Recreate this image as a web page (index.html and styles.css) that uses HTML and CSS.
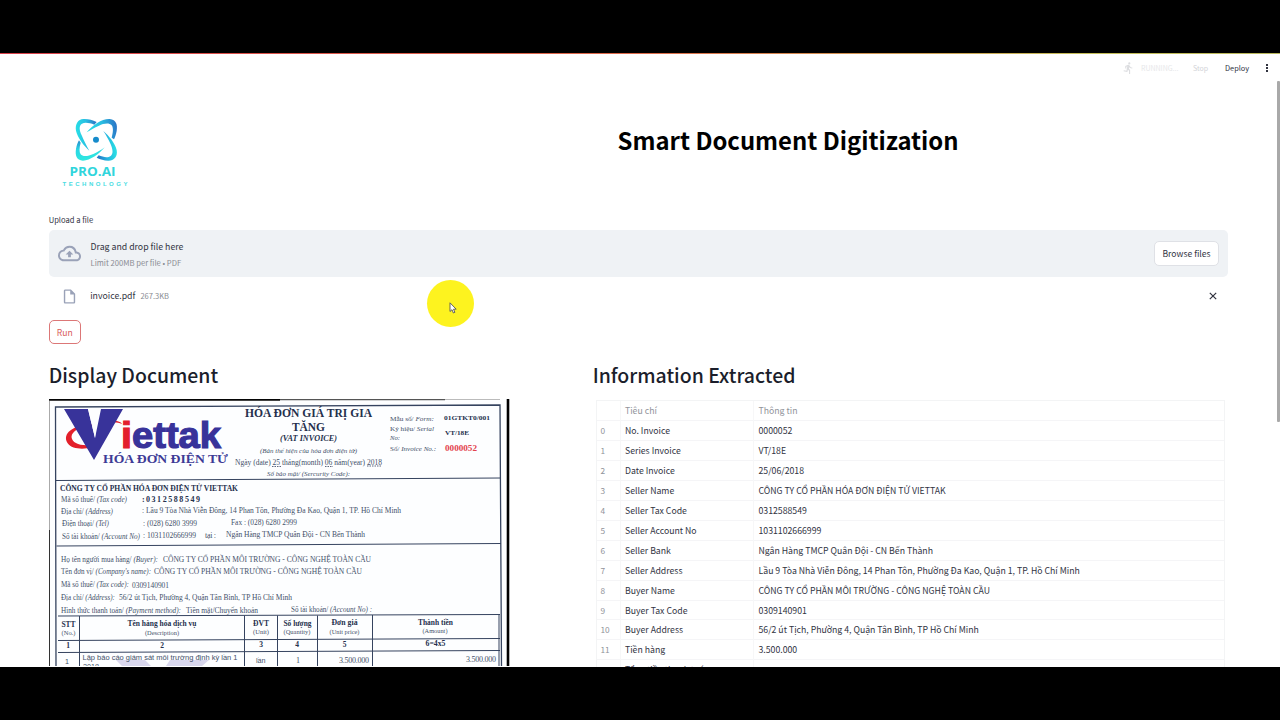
FILE: index.html
```html
<!DOCTYPE html>
<html lang="en">
<head>
<meta charset="utf-8">
<title>Smart Document Digitization</title>
<link rel="stylesheet" href="styles.css">
</head>
<body>
<div class="app">
  <header class="toolbar">
    <svg class="runner" viewBox="0 0 24 24"><path d="M13.500 5.500a2 2 0 1 0 0-4 2 2 0 0 0 0 4zM9.900 19.400l1-4.400 2.100 2v6h2v-7.500l-2.100-2 .6-3A7.300 7.300 0 0 0 19 13v-2c-1.900 0-3.500-1-4.300-2.400l-1-1.600c-.4-.6-1-1-1.700-1-.3 0-.5.1-.8.1L6 8.300V13h2V9.600l1.800-.7L8.200 17l-4.900-1-.4 2z"/></svg>
    <span class="running">RUNNING...</span>
    <span class="stop">Stop</span>
    <span class="deploy">Deploy</span>
    <span class="dots"><i></i><i></i><i></i></span>
  </header>
  <main class="content">
    <section class="brand">
      <svg class="logo" viewBox="0 0 90 84">
        <defs>
          <linearGradient id="toBlue" x1="0" y1=".4" x2="1" y2=".3"><stop offset="0" stop-color="#27dfe6"/><stop offset=".5" stop-color="#28bfe2"/><stop offset="1" stop-color="#2b74c6"/></linearGradient>
          <linearGradient id="fromBlue" x1="0" y1=".7" x2="1" y2=".6"><stop offset="0" stop-color="#2570c4"/><stop offset=".5" stop-color="#25b4df"/><stop offset="1" stop-color="#2ae2e4"/></linearGradient>
          <linearGradient id="down" x1="0" y1="0" x2=".2" y2="1"><stop offset="0" stop-color="#2687cc"/><stop offset=".45" stop-color="#29d6e4"/><stop offset="1" stop-color="#2fe8e0"/></linearGradient>
        </defs>
        <g transform="scale(.3333) translate(-39 -36)">
          <path fill="url(#toBlue)" d="M148 152C132 138 112 112 108 92C105 72 114 58 130 57C143 56 157 60 170 66L163 74C149 69 135 66 126 71C116 77 118 91 125 106C131 121 139 136 148 152Z"/>
          <path fill="url(#toBlue)" d="M140 97C158 75 186 56 209 57C229 59 233 74 230 93C228 104 225 112 222 118L215 113C219 99 221 84 215 76C207 67 190 71 177 77C163 83 151 90 140 97Z"/>
          <path fill="url(#fromBlue)" d="M190 93C207 107 226 131 230 150C234 171 221 183 204 182C192 181 181 178 170 173L176 166C190 172 204 174 212 168C221 161 218 147 212 133C206 119 198 105 190 93Z"/>
          <path fill="url(#down)" d="M194 142C177 162 151 182 129 182C109 181 105 165 108 147C110 136 113 128 117 121L122 128C118 143 117 155 122 163C129 172 146 168 160 162C173 156 184 150 194 142Z"/>
          <circle cx="168" cy="119" r="9" fill="#168bcb"/>
        </g>
        <text class="logo-name" x="16.500" y="64" textLength="46" lengthAdjust="spacingAndGlyphs">PRO.AI</text>
        <text class="logo-sub" x="9.500" y="73.800" textLength="65">TECHNOLOGY</text>
      </svg>
      <h1 class="title">Smart Document Digitization</h1>
    </section>
    <div class="label">Upload a file</div>
    <section class="dropzone">
      <svg class="cloud" viewBox="0 0 24 24"><path d="M19.350 10.040A7.490 7.490 0 0 0 12 4C9.110 4 6.600 5.640 5.350 8.040A5.994 5.994 0 0 0 0 14c0 3.310 2.690 6 6 6h13c2.760 0 5-2.240 5-5 0-2.640-2.050-4.780-4.650-4.960zM19 18H6c-2.210 0-4-1.790-4-4 0-2.050 1.530-3.760 3.560-3.970l1.070-.11.5-.95A5.469 5.469 0 0 1 12 6c2.620 0 4.880 1.860 5.390 4.430l.3 1.500 1.530.11A2.980 2.980 0 0 1 22 15c0 1.650-1.350 3-3 3zM8 13h2.550v3h2.900v-3H16l-4-4z"/></svg>
      <div class="drop-text"><span class="drop-main">Drag and drop file here</span><span class="drop-limit">Limit 200MB per file • PDF</span></div>
      <button class="browse">Browse files</button>
    </section>
    <section class="file-row">
      <svg class="file-icon" viewBox="0 0 24 24"><path d="M14 2H6c-1.100 0-2 .9-2 2v16c0 1.100.9 2 2 2h12c1.100 0 2-.9 2-2V8zM6 20V4h7v5h5v11z"/></svg>
      <span class="file-name">invoice.pdf</span><span class="file-size">267.3KB</span>
      <svg class="close" viewBox="0 0 8 8"><path d="M.8.8l6.400 6.400M7.200.8L.8 7.200"/></svg>
    </section>
    <button class="run">Run</button>
    <section class="columns">
      <div class="col">
        <h2>Display Document</h2>
        <svg class="invoice" viewBox="49 399 461 267">
          <rect x="49" y="399" width="461" height="267" fill="#fdfeff"/>
          <path d="M49 399.800H280" stroke="#050505" stroke-width="1.800"/><path d="M280 399.500H445" stroke="#555" stroke-width="1.300"/><path d="M445 399.500H500" stroke="#bbb"/>
          <path d="M508 399V666" stroke="#000" stroke-width="2.600"/>
          <path d="M49.500 401V530" stroke="#aaa"/><path d="M49.500 530V666" stroke="#333"/>
          <g fill="none" stroke="#35435f" stroke-width="1.300">
            <path d="M56 666L55.500 407L500 405L501.500 666"/>
            <path d="M56 480.500L501 478M56.500 546L501 543.500M58 616L500 614.500M58 640.500L500 638.500M58 652.500L500 650.500M79.500 616V666M244.500 615.500V666M277.500 615.500V666M317.500 615.500V666M372.500 615V666M499 615V666" stroke-width="1"/>
          </g>
          <path d="M116 660H145L151 666H122zM170 660H209L202 666H166z" fill="#d9d7ed"/>
          <path d="M93 424C72 425 62 434 67.500 443C72 449.500 83 449.500 92 447.500L90 445C80 446 72 443 71.500 437C71.500 431 80 427 93 425.500zM105 421C113 419.500 121 421 122 424C117 421.500 111 422.500 105 423z" fill="#e3202b"/>
          <path d="M64 409H88L95 438L101 409H123L94 460z" fill="#38339a"/><path d="M88 409H98L95 438z" fill="#fdfeff"/>
          <g class="viettak">
            <text x="121" y="448" fill="#e3202b" stroke="#e3202b" textLength="11" lengthAdjust="spacingAndGlyphs">i</text>
            <text x="132" y="448" fill="#38339a" stroke="#38339a" textLength="89" lengthAdjust="spacingAndGlyphs">ettak</text>
          </g>
          <text class="b hd" x="103" y="462.500" textLength="125" lengthAdjust="spacingAndGlyphs">HÓA ĐƠN ĐIỆN TỬ</text>
          <g class="b dark f12">
            <text x="245" y="417" textLength="127" lengthAdjust="spacingAndGlyphs">HÓA ĐƠN GIÁ TRỊ GIA</text>
            <text x="292" y="431" textLength="33" lengthAdjust="spacingAndGlyphs">TĂNG</text>
          </g>
          <text class="b i dark f8" x="280" y="440.500" textLength="57" lengthAdjust="spacingAndGlyphs">(VAT INVOICE)</text>
          <g class="f7">
            <text class="i" x="260" y="452.500" textLength="97" lengthAdjust="spacingAndGlyphs">(Bản thể hiện của hóa đơn điện tử)</text>
            <text class="f8" x="235" y="464.500" textLength="147" lengthAdjust="spacingAndGlyphs">Ngày (date) 25 tháng(month) 06 năm(year) 2018</text>
            <path d="M272 466.500H281M325 466.500H333M367 466H382" stroke="#35435f" stroke-width=".8" stroke-dasharray="1.500 1"/>
            <text class="i" x="267" y="475.500" textLength="83" lengthAdjust="spacingAndGlyphs">Số bảo mật/ (Sercurity Code):</text>
            <text x="390" y="420.500" textLength="44" lengthAdjust="spacingAndGlyphs">Mẫu số/ <tspan class="i">Form:</tspan></text>
            <text x="390" y="431" textLength="44" lengthAdjust="spacingAndGlyphs">Ký hiệu/ <tspan class="i">Serial</tspan></text>
            <text class="i" x="390" y="440" textLength="10" lengthAdjust="spacingAndGlyphs">No:</text>
            <text x="390" y="451" textLength="46" lengthAdjust="spacingAndGlyphs">Số/ <tspan class="i">Invoice No.:</tspan></text>
            <text class="b dark" x="444" y="420" textLength="46" lengthAdjust="spacingAndGlyphs">01GTKT0/001</text>
            <text class="b dark" x="445" y="435" textLength="24" lengthAdjust="spacingAndGlyphs">VT/18E</text>
            <text class="b red f8" x="445" y="451" textLength="32" lengthAdjust="spacingAndGlyphs">0000052</text>
          </g>
          <g class="f8">
            <text class="b dark" x="60" y="491" textLength="178" lengthAdjust="spacingAndGlyphs">CÔNG TY CỔ PHẦN HÓA ĐƠN ĐIỆN TỬ VIETTAK</text>
            <text x="61" y="502" textLength="66" lengthAdjust="spacingAndGlyphs">Mã số thuế/ <tspan class="i">(Tax code)</tspan></text><text class="b dark" x="142" y="501.500">:</text><text class="b dark" x="146" y="501.500" textLength="54">0312588549</text>
            <text x="61" y="514" textLength="52" lengthAdjust="spacingAndGlyphs">Địa chỉ/ <tspan class="i">(Address)</tspan></text><text x="142" y="513" textLength="259" lengthAdjust="spacingAndGlyphs">: Lầu 9 Tòa Nhà Viễn Đông, 14 Phan Tôn, Phường Đa Kao, Quận 1, TP. Hồ Chí Minh</text>
            <text x="62" y="526" textLength="47" lengthAdjust="spacingAndGlyphs">Điện thoại/ <tspan class="i">(Tel)</tspan></text><text x="143" y="525.500" textLength="54" lengthAdjust="spacingAndGlyphs">: (028) 6280 3999</text><text x="231" y="525" textLength="66" lengthAdjust="spacingAndGlyphs">Fax : (028) 6280 2999</text>
            <text x="62" y="538.500" textLength="78" lengthAdjust="spacingAndGlyphs">Số tài khoản/ <tspan class="i">(Account No)</tspan></text><text x="143" y="538" textLength="53" lengthAdjust="spacingAndGlyphs">: 1031102666999</text><text x="205" y="538" textLength="11">tại :</text><text x="226" y="537" textLength="139" lengthAdjust="spacingAndGlyphs">Ngân Hàng TMCP Quân Đội - CN Bến Thành</text>
            <text x="61" y="561.500" textLength="97" lengthAdjust="spacingAndGlyphs">Họ tên người mua hàng/ <tspan class="i">(Buyer):</tspan></text><text x="163" y="561.500" textLength="208" lengthAdjust="spacingAndGlyphs">CÔNG TY CỔ PHẦN MÔI TRƯỜNG - CÔNG NGHỆ TOÀN CẦU</text>
            <text x="61" y="573.500" textLength="90" lengthAdjust="spacingAndGlyphs">Tên đơn vị/ <tspan class="i">(Company's name):</tspan></text><text x="154" y="573.500" textLength="208" lengthAdjust="spacingAndGlyphs">CÔNG TY CỔ PHẦN MÔI TRƯỜNG - CÔNG NGHỆ TOÀN CẦU</text>
            <text x="61" y="587" textLength="68" lengthAdjust="spacingAndGlyphs">Mã số thuế/ <tspan class="i">(Tax code):</tspan></text><text x="132" y="587.500" textLength="37" lengthAdjust="spacingAndGlyphs">0309140901</text>
            <text x="61" y="600" textLength="54" lengthAdjust="spacingAndGlyphs">Địa chỉ/ <tspan class="i">(Address):</tspan></text><text x="119" y="600" textLength="173" lengthAdjust="spacingAndGlyphs">56/2 út Tịch, Phường 4, Quận Tân Bình, TP Hồ Chí Minh</text>
            <text x="61" y="613" textLength="120" lengthAdjust="spacingAndGlyphs">Hình thức thanh toán/ <tspan class="i">(Payment method):</tspan></text><text x="186" y="613" textLength="72" lengthAdjust="spacingAndGlyphs">Tiền mặt/Chuyển khoản</text><text x="291" y="611.500" textLength="81" lengthAdjust="spacingAndGlyphs">Số tài khoản/ <tspan class="i">(Account No) :</tspan></text>
          </g>
          <g class="b dark f75 mid">
            <text x="68.500" y="626.500">STT</text><text x="162" y="626" textLength="69" lengthAdjust="spacingAndGlyphs">Tên hàng hóa dịch vụ</text><text x="261" y="625.500">ĐVT</text><text x="297.500" y="625.500" textLength="28" lengthAdjust="spacingAndGlyphs">Số lượng</text><text x="344.500" y="625" textLength="26" lengthAdjust="spacingAndGlyphs">Đơn giá</text><text x="435.500" y="625" textLength="35" lengthAdjust="spacingAndGlyphs">Thành tiền</text>
            <text x="68" y="648">1</text><text x="162" y="647.500">2</text><text x="261" y="647">3</text><text x="297" y="647">4</text><text x="344.500" y="646.500">5</text><text x="435.500" y="646" textLength="20" lengthAdjust="spacingAndGlyphs">6=4x5</text>
          </g>
          <g class="f65 mid">
            <text x="68.500" y="634.500">(No.)</text><text x="162" y="634.500" textLength="34" lengthAdjust="spacingAndGlyphs">(Description)</text><text x="261" y="634" textLength="16" lengthAdjust="spacingAndGlyphs">(Unit)</text><text x="297" y="634" textLength="27" lengthAdjust="spacingAndGlyphs">(Quantity)</text><text x="344.500" y="633.500" textLength="30" lengthAdjust="spacingAndGlyphs">(Unit price)</text><text x="435" y="633" textLength="25" lengthAdjust="spacingAndGlyphs">(Amount)</text>
          </g>
          <g class="sans">
            <text x="65" y="664">1</text><text x="82.500" y="660" textLength="155" lengthAdjust="spacingAndGlyphs">Lập báo cáo giám sát môi trường định kỳ lần 1</text><text x="83" y="668.500">2018</text><text x="256" y="663">lần</text>
          </g>
          <g class="f8"><text x="296" y="662.500">1</text><text x="339" y="662.500" textLength="30">3.500.000</text><text x="466" y="662" textLength="30">3.500.000</text></g>
        </svg>
      </div>
      <div class="col">
        <h2>Information Extracted</h2>
        <div class="table">
          <div class="row head"><span></span><span>Tiêu chí</span><span>Thông tin</span></div>
          <div class="row"><span>0</span><span>No. Invoice</span><span>0000052</span></div>
          <div class="row"><span>1</span><span>Series Invoice</span><span>VT/18E</span></div>
          <div class="row"><span>2</span><span>Date Invoice</span><span>25/06/2018</span></div>
          <div class="row"><span>3</span><span>Seller Name</span><span>CÔNG TY CỔ PHẦN HÓA ĐƠN ĐIỆN TỬ VIETTAK</span></div>
          <div class="row"><span>4</span><span>Seller Tax Code</span><span>0312588549</span></div>
          <div class="row"><span>5</span><span>Seller Account No</span><span>1031102666999</span></div>
          <div class="row"><span>6</span><span>Seller Bank</span><span>Ngân Hàng TMCP Quân Đội - CN Bến Thành</span></div>
          <div class="row"><span>7</span><span>Seller Address</span><span>Lầu 9 Tòa Nhà Viễn Đông, 14 Phan Tôn, Phường Đa Kao, Quận 1, TP. Hồ Chí Minh</span></div>
          <div class="row"><span>8</span><span>Buyer Name</span><span>CÔNG TY CỔ PHẦN MÔI TRƯỜNG - CÔNG NGHỆ TOÀN CẦU</span></div>
          <div class="row"><span>9</span><span>Buyer Tax Code</span><span>0309140901</span></div>
          <div class="row"><span>10</span><span>Buyer Address</span><span>56/2 út Tịch, Phường 4, Quận Tân Bình, TP Hồ Chí Minh</span></div>
          <div class="row"><span>11</span><span>Tiền hàng</span><span>3.500.000</span></div>
          <div class="row"><span></span><span>Tổng tiền thanh toán</span><span></span></div>
        </div>
      </div>
    </section>
  </main>
  <div class="scrollbar"></div>
  <div class="pointer"><svg viewBox="0 0 8 12"><path d="M1 .8V9.500L3 7.700L4.400 11L5.900 10.300L4.500 7.200H7.200z"/></svg></div>
</div>
</body>
</html>
```

FILE: styles.css
```css
* { box-sizing: border-box; }
body { margin: 0; padding-top: 53px; height: 720px; overflow: hidden; background: #000; font-family: "Noto Sans CJK JP", "Noto Sans", sans-serif; color: #31333f; }
.app { position: relative; height: 613.500px; overflow: hidden; background: #fff; font-size: 8.720px; }
.app::before { content: ""; position: absolute; inset: 0 0 auto; height: 1px; background: linear-gradient(90deg, #d8404a, #dc6a4a 50%, #c4bd58 85%, #b8b65c); }
.toolbar { display: flex; align-items: center; justify-content: flex-end; height: 29.500px; padding-right: 12px; font-size: 7px; line-height: 12px; }
.runner { width: 13px; height: 14px; fill: #dcdde0; margin-right: 6.500px; }
.running { width: 39px; color: #e6e7e9; }
.stop { margin-left: 13px; width: 17px; color: #d2d3d7; }
.deploy { margin-left: 15px; width: 26px; font-size: 7.400px; color: #31333f; }
.dots { display: flex; flex-direction: column; gap: 1px; margin-left: 15px; }
.dots i { width: 2px; height: 2px; background: #31333f; }
.content { padding: 27.500px 52px 0 48.700px; }
.brand { display: flex; height: 102.500px; }
.logo { width: 90px; height: 84px; flex: none; margin: 2px 0 0 4.300px; }
.logo-name { font: 700 13px "Open Sans", sans-serif; fill: #30d5dc; }
.logo-sub { font: 700 6px "Liberation Sans", sans-serif; fill: #48dce2; }
.title { margin: 10px 0 0 474.600px; font-size: 23.850px; line-height: 40px; font-weight: 700; color: #000; white-space: nowrap; }
.label { height: 14px; line-height: 14px; font-size: 7.600px; }
.dropzone { display: flex; align-items: center; height: 47.500px; margin-top: 3px; padding: 0 9px; border-radius: 5px; background: #eff2f5; }
.cloud { width: 23px; height: 23px; fill: #9aa2b8; margin-right: 9.800px; }
.drop-text { display: flex; flex-direction: column; flex: 1; gap: 1.500px; padding-top: 3px; }
.drop-main { font-size: 8.750px; line-height: 14px; }
.drop-limit { font-size: 7.650px; line-height: 14px; color: #8a8c93; }
button { font-family: inherit; padding: 0; color: #31333f; background: #fff; }
.browse { width: 65px; height: 25px; border: 1px solid #dfe1e6; border-radius: 5px; font-size: 8.650px; }
.file-row { display: flex; align-items: center; height: 38px; padding: 0 11.500px 0 12px; }
.file-icon { width: 17px; height: 17px; fill: #9aa2b8; margin-right: 12.500px; }
.file-name, .file-size { padding-bottom: .5px; }
.file-name { font-size: 8.750px; }
.file-size { margin-left: 5px; font-size: 7.500px; color: #8a8c93; }
.close { width: 8px; height: 8px; margin-left: auto; fill: none; stroke: #31333f; stroke-width: 1.200; }
.run { display: block; margin-top: 4.500px; width: 32px; height: 24px; border: 1px solid #dc7777; border-radius: 5px; color: #d95c5c; font-size: 8.650px; }
.columns { display: grid; grid-template-columns: 544px 1fr; margin-top: 17px; }
h2 { margin: 0; height: 38px; line-height: 28.500px; font-size: 19.450px; font-weight: 500; color: #1b1e2b; white-space: nowrap; }
.invoice { display: block; width: 461px; height: 267px; margin-top: .5px; font-family: "Liberation Serif", serif; fill: #435069; }
.b { font-weight: 700; }
.i { font-style: italic; }
.dark { fill: #25304d; }
.red { fill: #e3434e; }
.f12 { font-size: 12px; }
.f8 { font-size: 8px; }
.f75 { font-size: 7.500px; }
.f7 { font-size: 7px; }
.f65 { font-size: 6.500px; }
.mid { text-anchor: middle; }
.hd { font-size: 12px; fill: #3d3b96; }
.sans { font: 7.200px "Liberation Sans", sans-serif; }
.viettak { font: 700 37px "Liberation Sans", sans-serif; stroke-width: 1.200; }
.table { width: 629px; margin: 1.800px 0 0 3.300px; border: 1px solid #f3f4f5; }
.row { display: grid; grid-template-columns: 24px 133.500px 1fr; height: 19.930px; line-height: 20px; border-bottom: 1px solid #f5f5f7; white-space: nowrap; }
.row span { padding-left: 4px; border-right: 1px solid #f7f7f8; }
.row span:last-child { border-right: 0; }
.row span:first-child, .head { color: #91939a; }
.row span:first-child { font-size: 8.300px; line-height: 19.500px; padding-left: 3.500px; }
.scrollbar { position: absolute; right: 0; top: 28px; width: 3px; height: 341px; background: #a9a9a9; border-radius: 1px; }
.pointer { position: absolute; left: 427px; top: 227px; width: 47px; height: 47px; border-radius: 50%; background: #fdf31f; }
.pointer svg { position: absolute; left: 22px; top: 22px; width: 8px; height: 12px; fill: #fff; stroke: #555; stroke-width: .9; }
```
